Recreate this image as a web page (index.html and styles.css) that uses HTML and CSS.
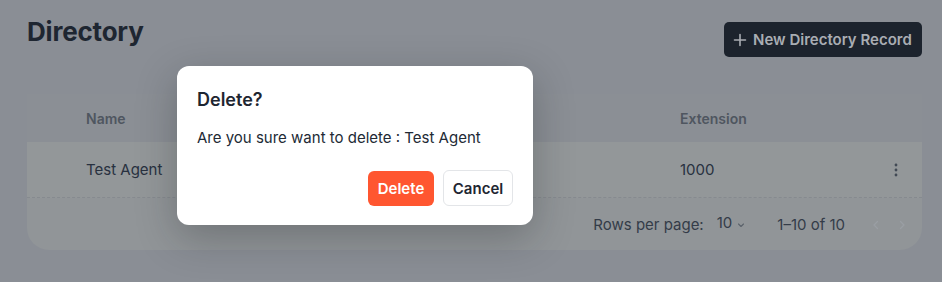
FILE: index.html
```html
<!DOCTYPE html>
<html>
<head>
<meta charset="utf-8">
<link rel="stylesheet" href="styles.css">
</head>
<body>
<div class="page">
  <div class="topbar">
    <h1 class="title">Directory</h1>
    <button class="new-btn">
      <svg width="14" height="14" viewBox="0 0 14 14" fill="none" stroke="currentColor" stroke-width="1.6" stroke-linecap="round"><path d="M7 1.5v11M1.5 7h11"/></svg>
      <span>New Directory Record</span>
    </button>
  </div>
  <div class="card">
    <div class="row head">
      <div class="c-name">Name</div>
      <div class="c-mid"></div>
      <div class="c-ext">Extension</div>
      <div class="c-act"></div>
    </div>
    <div class="row body">
      <div class="c-name">Test Agent</div>
      <div class="c-mid"></div>
      <div class="c-ext">1000</div>
      <div class="c-act">
        <svg width="4" height="14" viewBox="0 0 4 14" fill="currentColor"><circle cx="2" cy="2" r="1.4"/><circle cx="2" cy="7" r="1.4"/><circle cx="2" cy="12" r="1.4"/></svg>
      </div>
    </div>
    <div class="footer">
      <span class="rpp">Rows per page:</span>
      <span class="sel">10
        <svg width="10" height="10" viewBox="0 0 10 10" fill="none" stroke="currentColor" stroke-width="1.1" stroke-linecap="round" stroke-linejoin="round"><path d="M2.5 4l2.5 2.5L7.5 4"/></svg>
      </span>
      <span class="range">1–10 of 10</span>
      <span class="nav">
        <svg width="12" height="12" viewBox="0 0 12 12" fill="none" stroke="currentColor" stroke-width="1.3" stroke-linecap="round" stroke-linejoin="round"><path d="M7.5 2.5L4 6l3.5 3.5"/></svg>
        <svg width="12" height="12" viewBox="0 0 12 12" fill="none" stroke="currentColor" stroke-width="1.3" stroke-linecap="round" stroke-linejoin="round"><path d="M4.5 2.5L8 6l-3.5 3.5"/></svg>
      </span>
    </div>
  </div>
</div>
<div class="modal">
  <h2 class="m-title">Delete?</h2>
  <p class="m-text">Are you sure want to delete : Test Agent</p>
  <div class="m-actions">
    <button class="btn-del">Delete</button>
    <button class="btn-cancel">Cancel</button>
  </div>
</div>
</body>
</html>
```

FILE: styles.css
```css
* { box-sizing: border-box; }
html, body {
  margin: 0;
  height: 100%;
}
body {
  background: #8a8e95;
  font-family: Inter, "Liberation Sans", sans-serif;
  overflow: hidden;
}
.page {
  padding: 0 20px 0 27px;
}
.topbar {
  display: flex;
  justify-content: space-between;
  align-items: flex-start;
  height: 94px;
}
.title {
  margin: 16px 0 0 0;
  font-size: 26px;
  font-weight: 700;
  color: #1e2631;
  letter-spacing: -0.2px;
}
.new-btn {
  margin-top: 22px;
  height: 35px;
  width: 198px;
  display: flex;
  align-items: center;
  gap: 6px;
  padding: 0 0 0 9px;
  border: none;
  border-radius: 5px;
  background: #1c232d;
  color: #a9adb3;
  font-family: Inter, "Liberation Sans", sans-serif;
  font-size: 15px;
  font-weight: 600;
}
.card {
  border-radius: 0 0 22px 22px;
  background: #919598;
  overflow: hidden;
}
.row {
  display: grid;
  grid-template-columns: 59px 594px 1fr 40px;
  align-items: center;
}
.row > div:first-child { grid-column: 1 / 3; padding-left: 59px; }
.row .c-mid { display: none; }
.head {
  height: 48px;
  background: #8b8f95;
  color: #4f5660;
  font-size: 14px;
  font-weight: 600;
}
.body {
  height: 56px;
  background: #939799;
  color: #283140;
  font-size: 15px;
  border-bottom: 1px dashed #868a8f;
}
.c-act {
  color: #424a55;
  display: flex;
  align-items: center;
  justify-content: flex-start;
  padding-left: 12px;
}
.footer {
  height: 52px;
  display: flex;
  align-items: center;
  justify-content: flex-end;
  color: #343c48;
  font-size: 15px;
  padding-right: 14px;
}
.rpp { margin-right: 13px; }
.sel {
  display: inline-flex;
  align-items: center;
  gap: 4px;
  margin-right: 31px;
  margin-top: -3px;
}
.sel svg { margin-top: 5px; color: #5b626b; }
.range { margin-right: 25px; }
.nav {
  display: inline-flex;
  gap: 14px;
  color: #9a9ea4;
  margin-top: 2px;
}
.modal {
  position: absolute;
  left: 177px;
  top: 66px;
  width: 356px;
  height: 159px;
  background: #fff;
  border-radius: 12px;
  padding: 22px 20px 19px 20px;
  box-shadow: 0 12px 40px rgba(20,24,30,0.28);
}
.m-title {
  margin: 0;
  font-size: 18px;
  font-weight: 600;
  color: #1e2631;
  line-height: 24px;
}
.m-text {
  margin: 16px 0 0 0;
  font-size: 15px;
  color: #222a35;
  line-height: 20px;
}
.m-actions {
  display: flex;
  justify-content: flex-end;
  gap: 9px;
  margin-top: 23px;
}
.btn-del, .btn-cancel {
  height: 35px;
  border-radius: 6px;
  font-family: Inter, "Liberation Sans", sans-serif;
  font-size: 15px;
  font-weight: 600;
}
.btn-del {
  width: 66px;
  background: #ff5630;
  color: #fff;
  border: none;
}
.btn-cancel {
  width: 70px;
  height: 36px;
  margin-top: -1px;
  background: #fff;
  color: #1e2631;
  border: 1px solid #e3e5e8;
}
```
